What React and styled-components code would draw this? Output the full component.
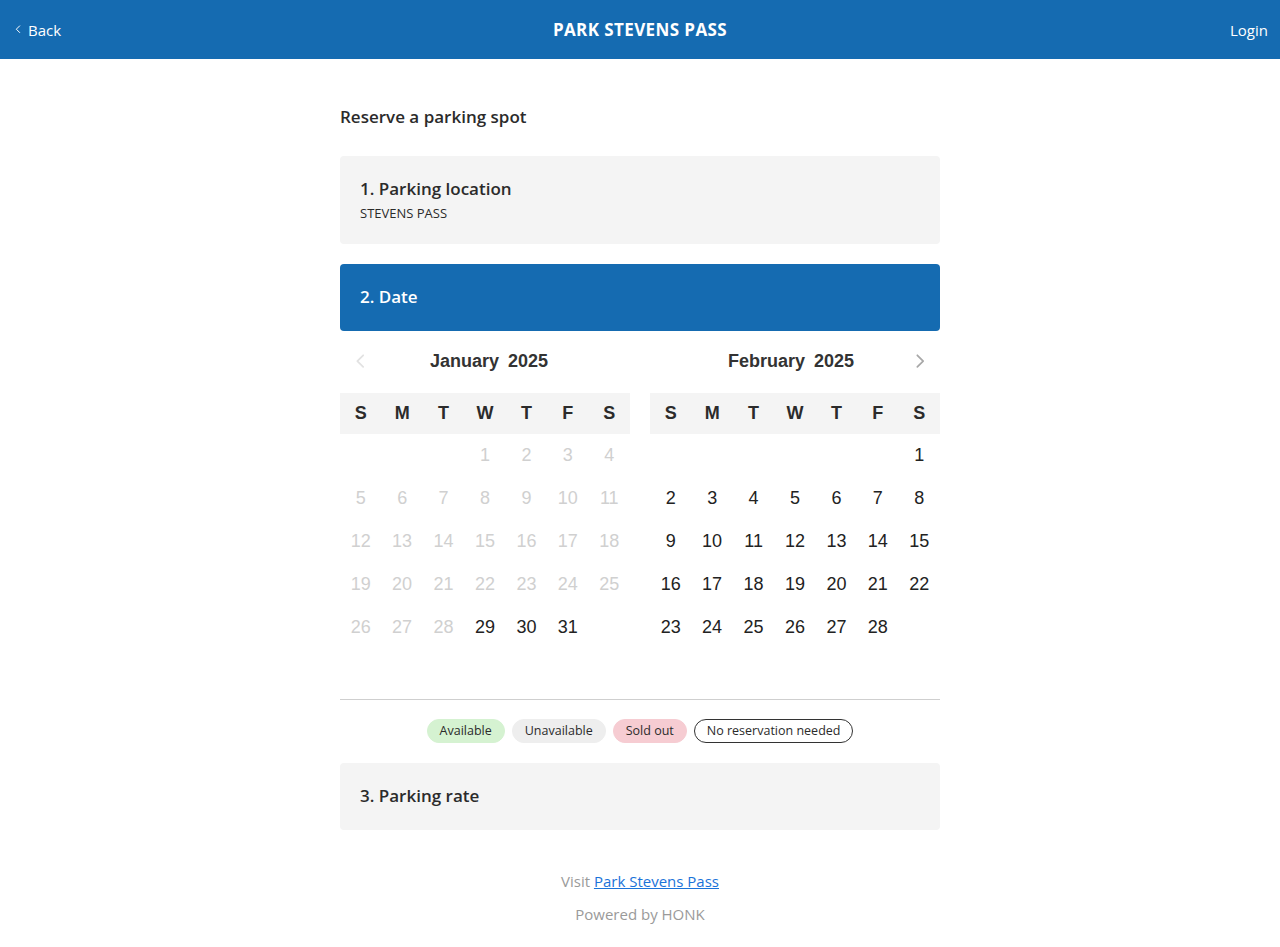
import React from "react";
import styled, { createGlobalStyle } from "styled-components";

const GlobalStyle = createGlobalStyle`
  body {
    margin: 0;
    background: #fff;
    font-family: "Open Sans", "Lato", sans-serif;
    color: #2b2b2b;
  }
  * { box-sizing: border-box; }
`;

const Header = styled.header`
  height: 59px;
  background: #156bb1;
  color: #fff;
  display: grid;
  grid-template-columns: 1fr auto 1fr;
  align-items: center;
  padding: 0 12px;
`;

const HeaderLink = styled.a`
  display: flex;
  align-items: center;
  gap: 7px;
  font-size: 15px;
  color: #fff;
  text-decoration: none;
  justify-self: ${(p) => (p.$right ? "end" : "start")};
  padding-left: ${(p) => (p.$right ? "0" : "3px")};
`;

const HeaderTitle = styled.h1`
  margin: 0;
  font-size: 17px;
  font-weight: 700;
  letter-spacing: 0.4px;
`;

const Main = styled.main`
  width: 600px;
  margin: 0 auto;
  padding-top: 46px;
`;

const PageTitle = styled.h2`
  margin: 0 0 27px;
  font-size: 17px;
  font-weight: 600;
  line-height: 24px;
`;

const Step = styled.section`
  background: ${(p) => (p.$active ? "#156bb1" : "#f4f4f4")};
  color: ${(p) => (p.$active ? "#fff" : "#2b2b2b")};
  border-radius: 4px;
  padding: 21px 20px;
  min-height: 67px;
`;

const StepTitle = styled.h3`
  margin: 0;
  font-size: 17px;
  font-weight: 600;
  line-height: 24px;
`;

const StepSub = styled.div`
  font-size: 13px;
  margin-top: 2px;
  line-height: 20px;
`;

const Spacer = styled.div`
  height: ${(p) => p.$h}px;
`;

const Months = styled.div`
  display: grid;
  grid-template-columns: 1fr 1fr;
  gap: 20px;
`;

const MonthHead = styled.div`
  position: relative;
  height: 62px;
  display: flex;
  align-items: center;
  justify-content: center;
  padding: ${(p) => (p.$side === "left" ? "0 0 1px 8px" : "0 8px 1px 0")};
  font-family: "Liberation Sans", Arial, sans-serif;
  font-weight: 700;
  font-size: 18px;
  color: #333;
  word-spacing: 4px;
`;

const NavArrow = styled.button`
  position: absolute;
  top: 20px;
  ${(p) => (p.$right ? "right: 12px;" : "left: 12px;")}
  background: none;
  border: 0;
  padding: 0;
  width: 16px;
  height: 20px;
  display: flex;
  align-items: center;
  justify-content: center;
`;

const Grid = styled.div`
  display: grid;
  grid-template-columns: repeat(7, 1fr);
  font-family: "Liberation Sans", Arial, sans-serif;
  font-size: 18px;
`;

const WeekDay = styled.div`
  height: 41px;
  background: #f4f4f4;
  display: flex;
  align-items: center;
  justify-content: center;
  font-weight: 700;
  color: #2b2b2b;
`;

const Day = styled.div`
  height: 43px;
  display: flex;
  align-items: center;
  justify-content: center;
  color: ${(p) => (p.$disabled ? "#d0d0d0" : "#222")};
`;

const Divider = styled.hr`
  border: 0;
  border-top: 1px solid #cfcfcf;
  margin: 50px 0 19px;
`;

const Legend = styled.div`
  display: flex;
  justify-content: center;
  gap: 7px;
  margin-bottom: 20px;
`;

const Pill = styled.span`
  height: 24px;
  line-height: 22px;
  padding: 0 12px;
  border-radius: 12px;
  font-size: 12.5px;
  color: #2b2b2b;
  background: ${(p) => p.$bg || "transparent"};
  border: 1px solid ${(p) => p.$border || p.$bg};
`;

const Footer = styled.footer`
  text-align: center;
  color: #9a9a9a;
  font-size: 15px;
  padding-top: 35px;
  line-height: 33px;
`;

const FooterLink = styled.a`
  color: #1a73d9;
  text-decoration: underline;
`;

const WEEK = ["S", "M", "T", "W", "T", "F", "S"];

function Chevron({ dir, color, size = 10 }) {
  const d = dir === "left" ? "M7 1 L2 6 L7 11" : "M2 1 L7 6 L2 11";
  return (
    <svg width={size * 0.75} height={size * 1.3} viewBox="0 0 9 12">
      <path d={d} fill="none" stroke={color} strokeWidth="1.5" strokeLinecap="round" strokeLinejoin="round" />
    </svg>
  );
}

function Month({ name, offset, days, firstEnabled, nav }) {
  const cells = [];
  for (let i = 0; i < offset; i++) cells.push(<Day key={"e" + i} />);
  for (let d = 1; d <= days; d++) {
    cells.push(
      <Day key={d} $disabled={d < firstEnabled}>
        {d}
      </Day>
    );
  }
  return (
    <div>
      <MonthHead $side={nav}>
        {nav === "left" && (
          <NavArrow>
            <Chevron dir="left" color="#e2e2e2" size={14} />
          </NavArrow>
        )}
        {name}
        {nav === "right" && (
          <NavArrow $right>
            <Chevron dir="right" color="#a8a8a8" size={14} />
          </NavArrow>
        )}
      </MonthHead>
      <Grid>
        {WEEK.map((w, i) => (
          <WeekDay key={i}>{w}</WeekDay>
        ))}
        {cells}
      </Grid>
    </div>
  );
}

export default function App() {
  return (
    <>
      <GlobalStyle />
      <Header>
        <HeaderLink href="#">
          <Chevron dir="left" color="#fff" size={8} />
          Back
        </HeaderLink>
        <HeaderTitle>PARK STEVENS PASS</HeaderTitle>
        <HeaderLink href="#" $right>
          Login
        </HeaderLink>
      </Header>
      <Main>
        <PageTitle>Reserve a parking spot</PageTitle>
        <Step>
          <StepTitle>1. Parking location</StepTitle>
          <StepSub>STEVENS PASS</StepSub>
        </Step>
        <Spacer $h={20} />
        <Step $active>
          <StepTitle>2. Date</StepTitle>
        </Step>
        <Months>
          <Month name="January 2025" offset={3} days={31} firstEnabled={29} nav="left" />
          <Month name="February 2025" offset={6} days={28} firstEnabled={1} nav="right" />
        </Months>
        <Divider />
        <Legend>
          <Pill $bg="#d5f2d1">Available</Pill>
          <Pill $bg="#eeeeee">Unavailable</Pill>
          <Pill $bg="#f6ccd2">Sold out</Pill>
          <Pill $border="#333">No reservation needed</Pill>
        </Legend>
        <Step>
          <StepTitle>3. Parking rate</StepTitle>
        </Step>
        <Footer>
          <div>
            Visit <FooterLink href="#">Park Stevens Pass</FooterLink>
          </div>
          <div>Powered by HONK</div>
        </Footer>
      </Main>
    </>
  );
}
